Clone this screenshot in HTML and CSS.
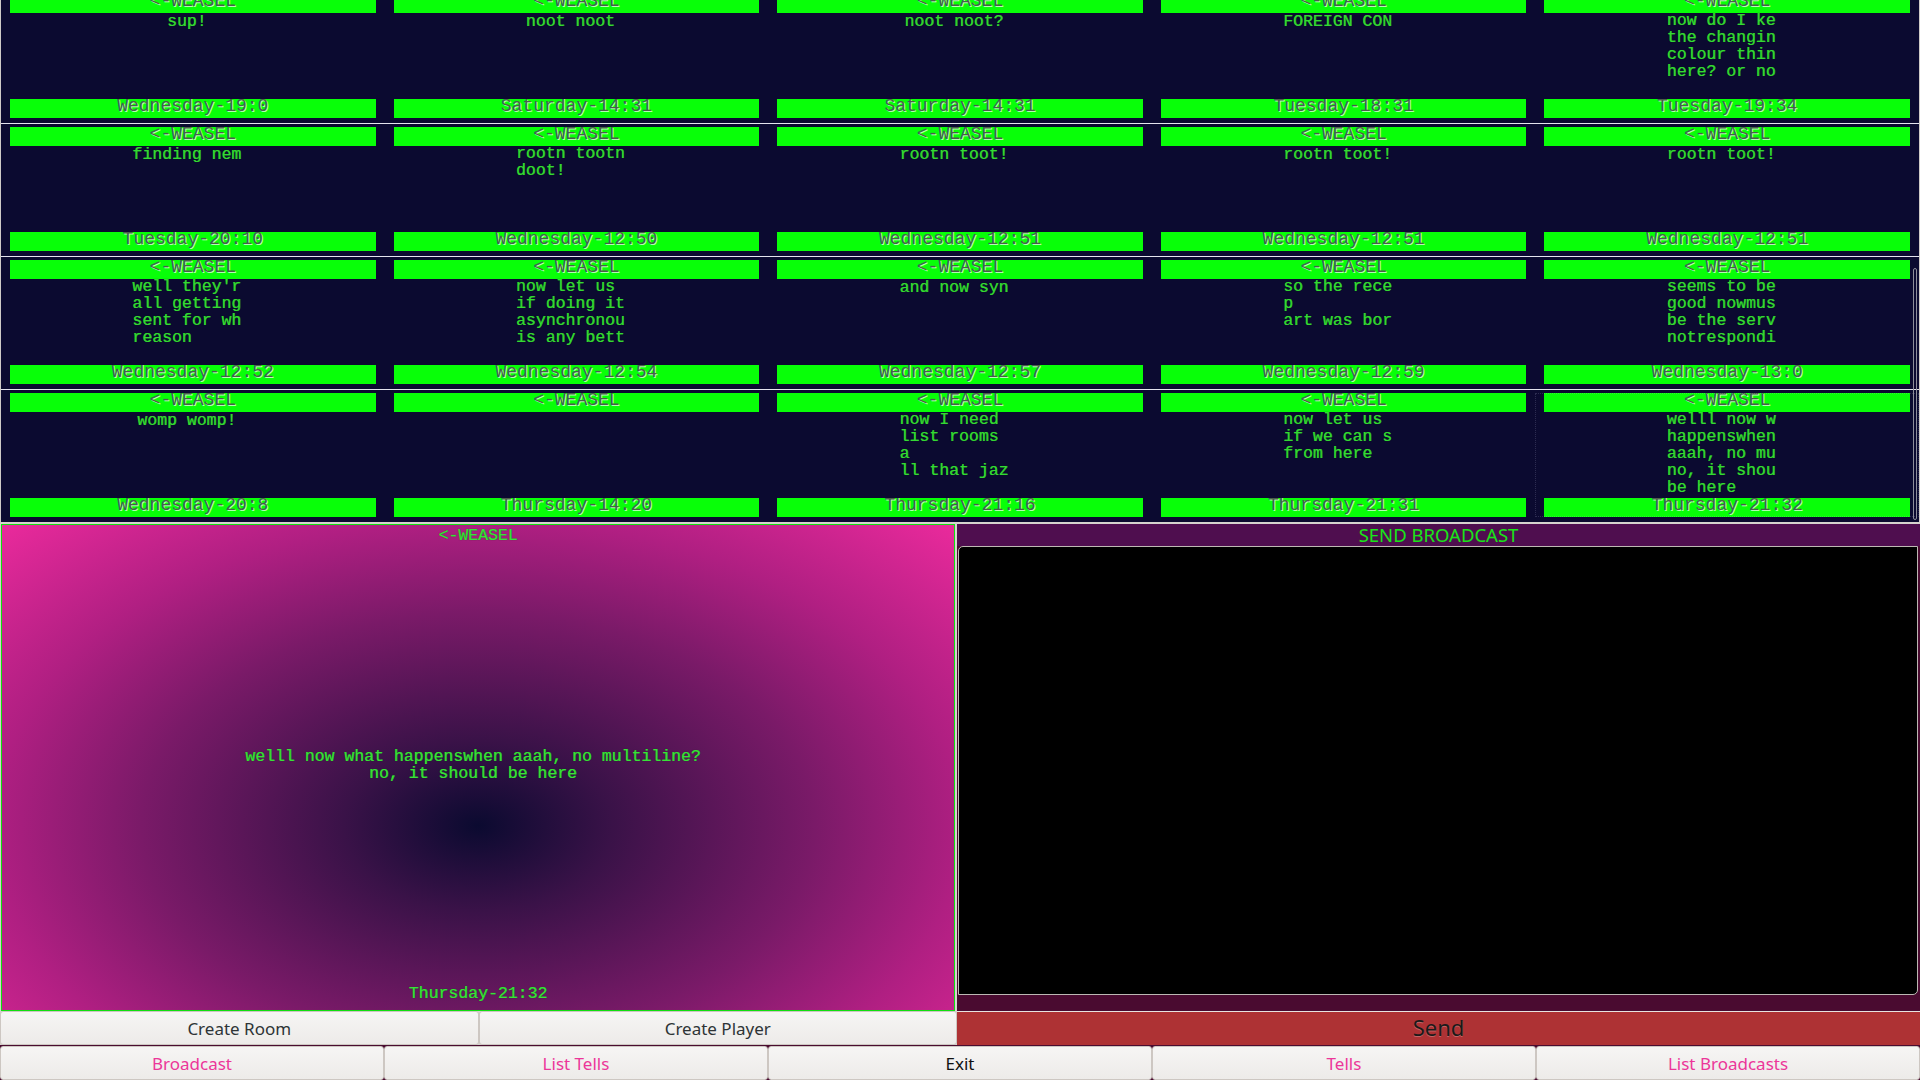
FILE: index.html
```html
<!DOCTYPE html>
<html>
<head>
<meta charset="utf-8">
<link rel="stylesheet" href="styles.css">
</head>
<body>
<div class="app">
  <div class="feed">
    <div class="feed-inner">
      <div class="row">
        <div class="cell"><div class="bar">&lt;-WEASEL</div><div class="msg"><span>sup!</span></div><div class="bar">Wednesday-19:0</div></div>
        <div class="cell"><div class="bar">&lt;-WEASEL</div><div class="msg"><span>noot noot</span></div><div class="bar">Saturday-14:31</div></div>
        <div class="cell"><div class="bar">&lt;-WEASEL</div><div class="msg"><span>noot noot?</span></div><div class="bar">Saturday-14:31</div></div>
        <div class="cell"><div class="bar">&lt;-WEASEL</div><div class="msg"><span>FOREIGN CON</span></div><div class="bar">Tuesday-18:31</div></div>
        <div class="cell"><div class="bar">&lt;-WEASEL</div><div class="msg"><span>now do I ke
the changin
colour thin
here? or no</span></div><div class="bar">Tuesday-19:34</div></div>
      </div>
      <div class="row">
        <div class="cell"><div class="bar">&lt;-WEASEL</div><div class="msg"><span>finding nem</span></div><div class="bar">Tuesday-20:10</div></div>
        <div class="cell"><div class="bar">&lt;-WEASEL</div><div class="msg"><span>rootn tootn
doot!</span></div><div class="bar">Wednesday-12:50</div></div>
        <div class="cell"><div class="bar">&lt;-WEASEL</div><div class="msg"><span>rootn toot!</span></div><div class="bar">Wednesday-12:51</div></div>
        <div class="cell"><div class="bar">&lt;-WEASEL</div><div class="msg"><span>rootn toot!</span></div><div class="bar">Wednesday-12:51</div></div>
        <div class="cell"><div class="bar">&lt;-WEASEL</div><div class="msg"><span>rootn toot!</span></div><div class="bar">Wednesday-12:51</div></div>
      </div>
      <div class="row">
        <div class="cell"><div class="bar">&lt;-WEASEL</div><div class="msg"><span>well they'r
all getting
sent for wh
reason</span></div><div class="bar">Wednesday-12:52</div></div>
        <div class="cell"><div class="bar">&lt;-WEASEL</div><div class="msg"><span>now let us
if doing it
asynchronou
is any bett</span></div><div class="bar">Wednesday-12:54</div></div>
        <div class="cell"><div class="bar">&lt;-WEASEL</div><div class="msg"><span>and now syn</span></div><div class="bar">Wednesday-12:57</div></div>
        <div class="cell"><div class="bar">&lt;-WEASEL</div><div class="msg"><span>so the rece
p
art was bor</span></div><div class="bar">Wednesday-12:59</div></div>
        <div class="cell"><div class="bar">&lt;-WEASEL</div><div class="msg"><span>seems to be
good nowmus
be the serv
notrespondi</span></div><div class="bar">Wednesday-13:0</div></div>
      </div>
      <div class="row">
        <div class="cell"><div class="bar">&lt;-WEASEL</div><div class="msg"><span>womp womp!</span></div><div class="bar">Wednesday-20:8</div></div>
        <div class="cell"><div class="bar">&lt;-WEASEL</div><div class="msg"><span></span></div><div class="bar">Thursday-14:20</div></div>
        <div class="cell"><div class="bar">&lt;-WEASEL</div><div class="msg"><span>now I need
list rooms
a
ll that jaz</span></div><div class="bar">Thursday-21:16</div></div>
        <div class="cell"><div class="bar">&lt;-WEASEL</div><div class="msg"><span>now let us
if we can s
from here</span></div><div class="bar">Thursday-21:31</div></div>
        <div class="cell focused"><div class="bar">&lt;-WEASEL</div><div class="msg"><span>welll now w
happenswhen
aaah, no mu
no, it shou
be here</span></div><div class="bar">Thursday-21:32</div></div>
      </div>
    </div>
    <div class="scrollbar"></div>
  </div>

  <div class="bottom">
    <div class="panes">
      <div class="left">
        <div class="viewer">
          <div class="v-title">&lt;-WEASEL</div>
          <div class="v-msg">welll now what happenswhen aaah, no multiline?<br>no, it should be here</div>
          <div class="v-time">Thursday-21:32</div>
        </div>
        <div class="btnrow">
          <button class="btn">Create Room</button>
          <button class="btn">Create Player</button>
        </div>
      </div>
      <div class="right">
        <div class="b-title">SEND BROADCAST</div>
        <div class="b-text"></div>
        <div class="b-strip"></div>
        <button class="send">Send</button>
      </div>
    </div>
    <div class="navrow">
      <button class="btn pink">Broadcast</button>
      <button class="btn pink">List Tells</button>
      <button class="btn dark">Exit</button>
      <button class="btn pink">Tells</button>
      <button class="btn pink">List Broadcasts</button>
    </div>
  </div>
</div>
</body>
</html>
```

FILE: styles.css
```css
* { box-sizing: border-box; }
html, body {
  margin: 0;
  padding: 0;
  width: 1920px;
  height: 1080px;
  overflow: hidden;
  background: #4a0c30;
}
.app {
  width: 1920px;
  height: 1080px;
  display: flex;
  flex-direction: column;
}
.feed {
  position: relative;
  height: 522px;
  flex: none;
  overflow: hidden;
  background: #0b0a30;
  border-left: 1px solid #cfcbc7;
  border-right: 1px solid #cfcbc7;
}
.feed-inner {
  margin-top: -10px;
}
.row {
  display: grid;
  grid-template-columns: repeat(5, 1fr);
  border-top: 1px solid #e4e4ee;
  padding: 3px 0 5px;
}
.cell {
  padding: 0 9px;
  display: flex;
  flex-direction: column;
}
.focused {
  outline: 1px dotted rgba(200, 200, 230, 0.18);
  outline-offset: -1px;
}
.bar {
  height: 19px;
  background: #08ff08;
  font-family: "Liberation Mono", monospace;
  font-size: 18px;
  line-height: 14px;
  text-align: center;
  color: #4a5e4a;
  text-shadow: 1px 1px 0 rgba(255, 255, 255, 0.7);
  white-space: pre;
  overflow: hidden;
}
.msg {
  height: 86px;
  text-align: center;
  padding-right: 12px;
  font-family: "Liberation Mono", monospace;
  font-size: 16.5px;
  line-height: 17px;
  color: #35d835;
  text-shadow: 0 0 1px rgba(0, 60, 0, 0.7), 0.4px 0 0 #35d835;
}
.msg span {
  display: inline-block;
  text-align: left;
  white-space: pre;
  margin-top: -1px;
}
.scrollbar {
  position: absolute;
  right: 2px;
  top: 268px;
  width: 4px;
  height: 252px;
  border: 1px solid #8e8e9a;
  border-radius: 3px;
}

.bottom {
  flex: 1;
  display: flex;
  flex-direction: column;
  border-top: 1px solid #d6d2ce;
}
.panes {
  height: 522px;
  display: flex;
}
.left {
  width: 957px;
  display: flex;
  flex-direction: column;
  background: #d6d2ce;
  padding-left: 1px;
  padding-right: 2px;
}
.viewer {
  flex: 1;
  border: 1px solid #10e010;
  margin-top: 1px;
  background: radial-gradient(ellipse farthest-corner at 50% 62%, #0b0a30 0%, #3a1248 20%, #7a1a68 50%, #b01f82 72%, #ea2a9c 100%);
  display: flex;
  flex-direction: column;
  align-items: center;
  font-family: "Liberation Mono", monospace;
  font-size: 16.5px;
  line-height: 17px;
  color: #3ae03a;
  text-shadow: 0 0 1px rgba(0, 60, 0, 0.7), 0.4px 0 0 #3ae03a;
  text-align: center;
}
.v-title {
  padding-top: 2px;
}
.v-msg {
  flex: 1;
  display: flex;
  flex-direction: column;
  justify-content: center;
  padding-top: 1px;
  padding-right: 10px;
}
.v-time {
  padding-bottom: 8px;
}
.btnrow {
  height: 34px;
  display: flex;
  margin-left: -1px;
  margin-right: -2px;
}
.btn {
  flex: 1;
  height: 100%;
  margin: 0;
  border: 1px solid #cdc7c2;
  border-radius: 3px;
  background: linear-gradient(to bottom, #f6f5f4, #edebe9);
  font-family: "Noto Sans", "Open Sans", sans-serif;
  font-size: 17px;
  color: #2e3436;
  padding: 0;
}
.btn.pink { color: #ec3699; }
.btn.dark { color: #111; }

.right {
  flex: 1;
  display: flex;
  flex-direction: column;
  background: #4a0b30;
}
.b-title {
  height: 23px;
  background: #4f0e4f;
  color: #18e418;
  font-family: "Noto Sans", "Open Sans", sans-serif;
  font-size: 18.5px;
  line-height: 21px;
  text-align: center;
  border-top: 1px solid #d6d2ce;
}
.b-text {
  flex: 1;
  background: #000;
  border: 1px solid #bdb8b3;
  border-radius: 5px 0 5px 0;
  margin: 0 2px 0 1px;
}
.b-strip {
  height: 17px;
  background: #4a0b30;
  border-bottom: 1px solid #e8e4e0;
}
.send {
  height: 33px;
  margin: 0;
  border: none;
  background: #ae3234;
  color: #1a1a1a;
  font-family: "Noto Sans", "Open Sans", sans-serif;
  font-size: 22px;
  line-height: 28px;
  text-shadow: 0 1px 0 rgba(255, 255, 255, 0.25);
  padding: 0 0 4px;
}
.navrow {
  height: 34px;
  display: flex;
  margin-top: 1px;
}
```
